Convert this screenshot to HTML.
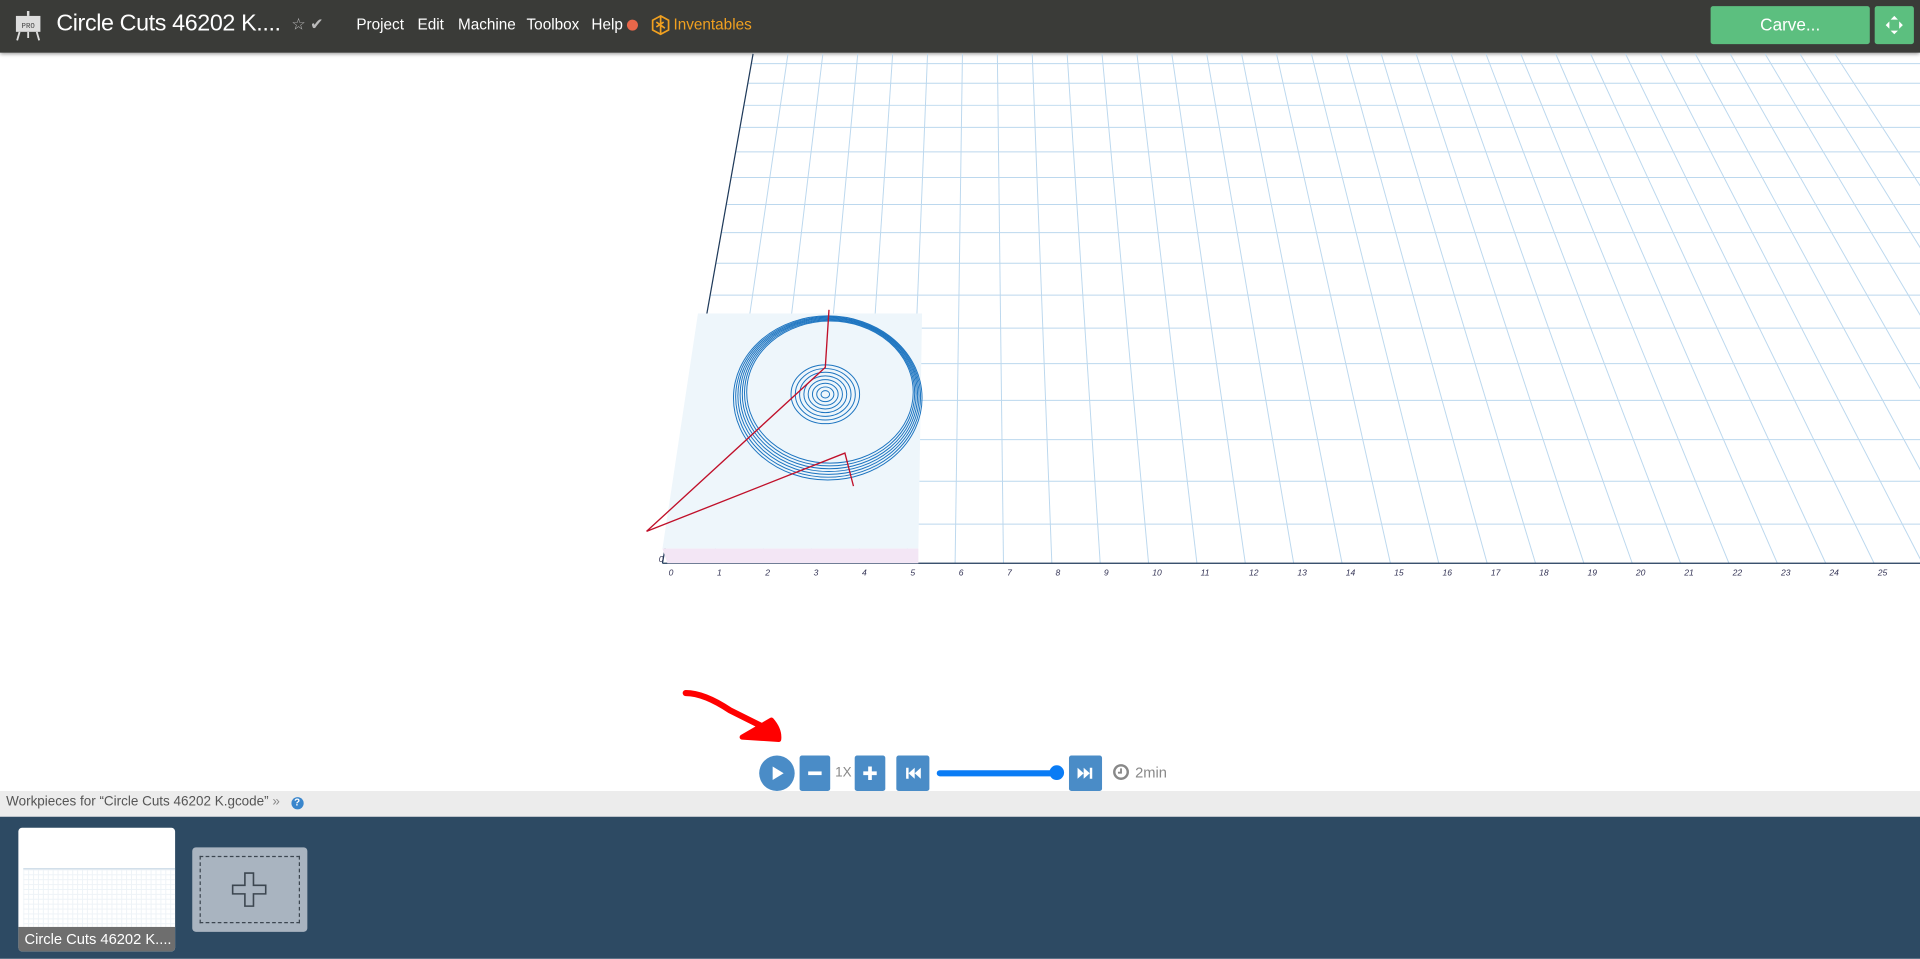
<!DOCTYPE html>
<html><head><meta charset="utf-8"><style>
html,body{margin:0;padding:0;width:1920px;height:959px;overflow:hidden;background:#fff;font-family:"Liberation Sans",sans-serif}
#w{width:1568px;height:783px;position:relative;transform:scale(1.22449);transform-origin:0 0}
.hd{position:absolute;left:0;top:0;width:1568px;height:43px;background:#3a3b38;box-shadow:0 1px 3px rgba(0,0,0,.4)}
.t{position:absolute;color:#fff;white-space:nowrap}
.btn{position:absolute;background:#4a8cc7;border-radius:2px;color:#fff;text-align:center}
</style></head><body><div id="w">
<div class="hd">
 <svg style="position:absolute;left:11px;top:9px" width="24" height="25" viewBox="0 0 24 25"><rect x="11" y="0" width="2" height="4" fill="#ddd"/><rect x="2" y="4" width="20" height="13" fill="#ddd"/><text x="12" y="14" font-size="6" text-anchor="middle" fill="#444" font-family="Liberation Mono">PRO</text><path d="M5 17 L3 24 M19 17 L21 24 M12 17 V22" stroke="#ddd" stroke-width="1.5"/></svg>
 <div class="t" style="left:46px;top:9px;font-size:19px;letter-spacing:-0.3px">Circle Cuts 46202 K....</div>
 <div class="t" style="left:238px;top:12px;font-size:13px;color:#bbb">☆ ✔</div>
 <div class="t" style="left:291px;top:13px;font-size:12.5px">Project</div>
 <div class="t" style="left:341px;top:13px;font-size:12.5px">Edit</div>
 <div class="t" style="left:374px;top:13px;font-size:12.5px">Machine</div>
 <div class="t" style="left:430px;top:13px;font-size:12.5px">Toolbox</div>
 <div class="t" style="left:483px;top:13px;font-size:12.5px">Help</div>
 <div style="position:absolute;left:512px;top:16px;width:9px;height:9px;border-radius:50%;background:#e8674a"></div>
 <svg style="position:absolute;left:532px;top:12px" width="15" height="17" viewBox="0 0 15 17"><path d="M7.5 1 L14 4.5 V12.5 L7.5 16 L1 12.5 V4.5Z M4 6 L11 11 M4 10 L10 6 M7.5 1 V16" stroke="#f0a020" stroke-width="1.4" fill="none"/></svg>
 <div class="t" style="left:550px;top:13px;font-size:12.5px;color:#f0a020">Inventables</div>
 <div style="position:absolute;left:1397px;top:5px;width:130px;height:31px;background:#5cbf7f;border-radius:2px;color:#fff;font-size:14px;text-align:center;line-height:31px">Carve...</div>
 <div style="position:absolute;left:1531px;top:5px;width:32px;height:31px;background:#5cbf7f;border-radius:2px"><svg width="32" height="31"><path d="M16 8l-3 3h6z M16 23l-3-3h6z M9 15.5l3-3v6z M23 15.5l-3-3v6z" fill="#fff"/></svg></div>
</div>
<svg id="g" style="position:absolute;left:0;top:0" width="1568" height="783"></svg>
<svg style="position:absolute;left:0;top:0" width="1568" height="783">
 <path d="M560 566 Q575 566 596 580 L630 597" stroke="#f00" stroke-width="5" fill="none" stroke-linecap="round"/>
 <path d="M606 602 L630 588 Q637 596 636 604 Z" stroke="#f00" stroke-width="4" fill="#f00" stroke-linejoin="round"/>
</svg>
<div style="position:absolute;left:620px;top:617px;width:29px;height:29px;border-radius:50%;background:#4a8cc7"><svg width="29" height="29"><path d="M11 9 L20 14.5 L11 20Z" fill="#fff"/></svg></div>
<div class="btn" style="left:653px;top:617px;width:25px;height:29px"><svg width="25" height="29"><rect x="7" y="13" width="11" height="3" fill="#fff"/></svg></div>
<div class="t" style="left:682px;top:625px;font-size:11px;color:#888">1X</div>
<div class="btn" style="left:698px;top:617px;width:25px;height:29px"><svg width="25" height="29"><path d="M7 13h11v3H7z M11 9h3v11h-3z" fill="#fff"/></svg></div>
<div class="btn" style="left:732px;top:617px;width:27px;height:29px"><svg width="27" height="29"><path d="M8 10h2v9H8z M15 10v9l-5-4.5z M20 10v9l-5-4.5z" fill="#fff"/></svg></div>
<div style="position:absolute;left:765px;top:629px;width:98px;height:5px;border-radius:3px;background:#0a7cf5"></div>
<div style="position:absolute;left:857px;top:625px;width:12px;height:12px;border-radius:50%;background:#0a7cf5"></div>
<div class="btn" style="left:873px;top:617px;width:27px;height:29px"><svg width="27" height="29"><path d="M7 10v9l5-4.5z M12 10v9l5-4.5z M17 10h2v9h-2z" fill="#fff"/></svg></div>
<svg style="position:absolute;left:908px;top:623px" width="15" height="15"><circle cx="7.5" cy="7.5" r="5.5" stroke="#888" stroke-width="2" fill="none"/><path d="M7.5 4.5V8H5" stroke="#888" stroke-width="1.5" fill="none"/></svg>
<div class="t" style="left:927px;top:624px;font-size:12px;color:#888">2min</div>
<div style="position:absolute;left:0;top:646px;width:1568px;height:21px;background:#ececec"></div>
<div class="t" style="left:5px;top:649px;font-size:11px;color:#555">Workpieces for “Circle Cuts 46202 K.gcode” <span style="color:#888">»</span> <span style="display:inline-block;width:10px;height:10px;border-radius:50%;background:#3a86cc;color:#fff;font-size:8px;text-align:center;line-height:10px;margin-left:6px;font-weight:bold">?</span></div>
<div style="position:absolute;left:0;top:667px;width:1568px;height:116px;background:#2d4a63"></div>
<div style="position:absolute;left:15px;top:676px;width:128px;height:101px;background:#fff;border-radius:3px;overflow:hidden">
 <div style="position:absolute;left:4px;top:33px;right:0;height:48px;border-top:1px solid #c9d9e6;background-image:linear-gradient(#eef3f7 1px,transparent 1px),linear-gradient(90deg,#eef3f7 1px,transparent 1px);background-size:4px 4px"></div>
 <div style="position:absolute;left:0;bottom:0;width:128px;height:20px;background:#6e6e6e;color:#fff;font-size:12px;line-height:20px;padding-left:5px;box-sizing:border-box">Circle Cuts 46202 K....</div>
</div>
<div style="position:absolute;left:157px;top:692px;width:94px;height:69px;background:#a9b4c0;border-radius:3px">
 <div style="position:absolute;left:6px;top:7px;right:6px;bottom:7px;border:1.5px dashed #3c4650"></div>
 <svg style="position:absolute;left:32px;top:20px" width="30" height="30"><path d="M11 1h7v10h10v7H18v10h-7V18H1v-7h10z" fill="none" stroke="#3c4650" stroke-width="1.3"/></svg>
</div>
</div>
<script>
var s=document.getElementById('g'),h='';
function L(a,b,c,d,col,w){h+='<line x1="'+a+'" y1="'+b+'" x2="'+c+'" y2="'+d+'" stroke="'+col+'" stroke-width="'+(w||0.8)+'"/>';}
function lx(y){return 541+(615-541)*(460-y)/416;}
var rows=[52,68,86,104,124,145,167,190,215,241,268,297,327,359,393,428];
rows.forEach(function(y){L(lx(y),y,1568,y,'#bcd8ee');});
for(var i=1;i<32;i++){var xb=543+39.5*i,xt=615+28.5*i;L(xt,44,xb,460,'#bcd8ee');}
L(615,44,541,460,'#1f3a5a',1);L(541,460,1568,460,'#1f3a5a',1);
for(var i=0;i<26;i++){h+='<text x="'+(546+39.5*i)+'" y="470" font-size="7" font-style="italic" fill="#335" font-family="Liberation Sans">'+i+'</text>';}
h+='<text x="538" y="459" font-size="7" font-style="italic" fill="#335">0</text>';
h+='<path d="M570 256 L753 256 L750 448 L541 448Z" fill="#eef6fb"/><path d="M541 448 L750 448 L750 460 L545 460Z" fill="#f3e6f5"/>';
for(var k=0;k<7;k++){h+='<ellipse cx="'+(676+k*0.3)+'" cy="'+(325-k*0.8)+'" rx="'+(77-k*1.5)+'" ry="'+(67-k*1.5)+'" fill="none" stroke="#1c74c0" stroke-width="0.8"/>';}
for(var k=1;k<=8;k++){h+='<ellipse cx="674" cy="322" rx="'+(k*3.5)+'" ry="'+(k*3)+'" fill="none" stroke="#1c74c0" stroke-width="0.8"/>';}
h+='<path d="M528 434 L674 300 L677 253 M528 434 L690 370 L697 397" stroke="#c0102a" stroke-width="1.1" fill="none"/>';
s.innerHTML=h;
</script>
</body></html>
